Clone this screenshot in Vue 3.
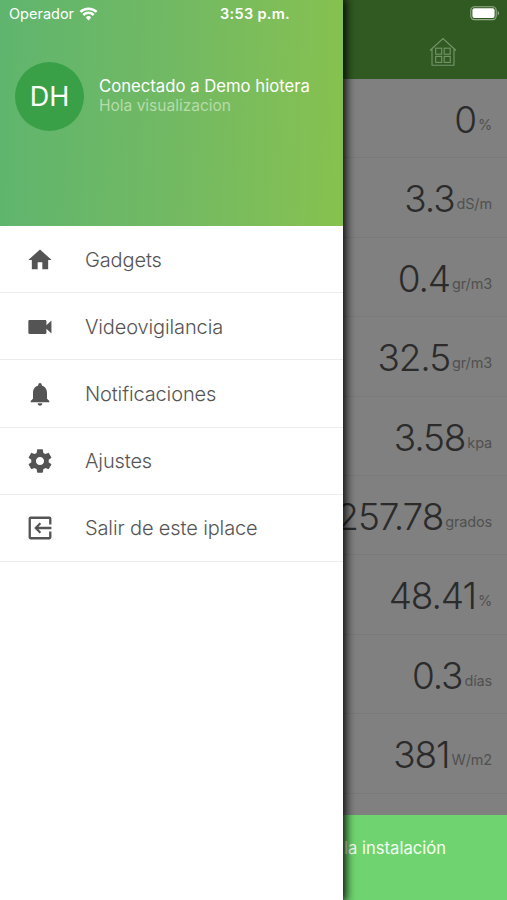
<template>
  <div class="screen">
    <div class="page">
      <div class="toolbar">
        <svg class="house" viewBox="0 0 28 30" fill="none" stroke="#76946a" stroke-width="1.1">
          <path d="M1 13.5 14 1.5 27 13.5M3 12V28.3H25V12" />
          <rect x="6.7" y="11.2" width="6" height="6" />
          <rect x="15.2" y="11.2" width="6" height="6" />
          <rect x="6.7" y="19.4" width="6" height="6" />
          <rect x="15.2" y="19.4" width="6" height="6" />
        </svg>
      </div>
      <div class="readings">
        <div class="reading" v-for="(item, i) in readings" :key="i">
          <span class="value">{{ item.value }}</span>
          <span class="unit">{{ item.unit }}</span>
        </div>
      </div>
      <div class="toast">la instalación</div>
    </div>

    <div class="drawer">
      <div class="profile">
        <div class="avatar">DH</div>
        <div class="user">
          <div class="title">Conectado a Demo hiotera</div>
          <div class="greeting">Hola visualizacion</div>
        </div>
      </div>
      <div class="menu">
        <div class="menu-item" v-for="item in menu" :key="item.label">
          <svg class="menu-icon" viewBox="0 0 24 24"><path :d="item.icon" /></svg>
          <span class="label">{{ item.label }}</span>
        </div>
      </div>
    </div>

    <div class="status">
      <div class="carrier">
        <span>Operador</span>
        <svg class="wifi" viewBox="0 0 18 14" fill="none" stroke="#fff" stroke-width="2.5">
          <path d="M0.9 4.9A11.7 11.7 0 0 1 17.1 4.9" />
          <path d="M3.8 8A7.4 7.4 0 0 1 14.2 8" />
          <path d="M6.3 10.4A3.9 3.9 0 0 1 11.7 10.4L9 13.4Z" fill="#fff" stroke="none" />
        </svg>
      </div>
      <div class="time">3:53 p.m.</div>
      <svg class="battery" viewBox="0 0 31 15">
        <rect x="0.8" y="0.8" width="25.4" height="12.8" rx="3.6" fill="none" stroke="#98ac8c" stroke-width="1.1" />
        <rect x="2.4" y="2.3" width="22.2" height="9.8" rx="2" fill="#fff" />
        <path d="M27.7 4.8Q30.6 7.2 27.7 9.6Z" fill="#98ac8c" />
      </svg>
    </div>
  </div>
</template>

<script setup>
const readings = [
  { value: '0', unit: '%' },
  { value: '3.3', unit: 'dS/m' },
  { value: '0.4', unit: 'gr/m3' },
  { value: '32.5', unit: 'gr/m3' },
  { value: '3.58', unit: 'kpa' },
  { value: '257.78', unit: 'grados' },
  { value: '48.41', unit: '%' },
  { value: '0.3', unit: 'días' },
  { value: '381', unit: 'W/m2' }
]

const menu = [
  { label: 'Gadgets', icon: 'M10 20v-6h4v6h5v-8h3L12 3 2 12h3v8z' },
  {
    label: 'Videovigilancia',
    icon: 'M17.5 10.5V7c0-.55-.45-1-1-1H3c-.55 0-1 .45-1 1v10c0 .55.45 1 1 1h13.5c.55 0 1-.45 1-1v-3.5l4.3 4v-11l-4.3 4z'
  },
  {
    label: 'Notificaciones',
    icon: 'M12 22c1.1 0 2-.9 2-2h-4c0 1.1.89 2 2 2zm6-6v-5c0-3.07-1.64-5.64-4.5-6.32V4c0-.83-.67-1.5-1.5-1.5s-1.5.67-1.5 1.5v.68C7.63 5.36 6 7.92 6 11v5l-2 2v1h16v-1l-2-2z'
  },
  {
    label: 'Ajustes',
    icon: 'M19.43 12.98c.04-.32.07-.64.07-.98s-.03-.66-.07-.98l2.11-1.65c.19-.15.24-.42.12-.64l-2-3.46c-.12-.22-.39-.3-.61-.22l-2.49 1c-.52-.4-1.08-.73-1.69-.98l-.38-2.65C14.46 2.18 14.25 2 14 2h-4c-.25 0-.46.18-.49.42l-.38 2.65c-.61.25-1.17.59-1.69.98l-2.49-1c-.23-.09-.49 0-.61.22l-2 3.46c-.13.22-.07.49.12.64l2.11 1.65c-.04.32-.07.65-.07.98s.03.66.07.98l-2.11 1.65c-.19.15-.24.42-.12.64l2 3.46c.12.22.39.3.61.22l2.49-1c.52.4 1.08.73 1.69.98l.38 2.65c.03.24.24.42.49.42h4c.25 0 .46-.18.49-.42l.38-2.65c.61-.25 1.17-.59 1.69-.98l2.49 1c.23.09.49 0 .61-.22l2-3.46c.12-.22.07-.49-.12-.64l-2.11-1.65zM12 15.5c-1.93 0-3.5-1.57-3.5-3.5s1.57-3.5 3.5-3.5 3.5 1.57 3.5 3.5-1.57 3.5-3.5 3.5z'
  },
  {
    label: 'Salir de este iplace',
    icon: 'M13 15.4 11.7 16.7 7 12l4.7-4.7L13 8.6 10.6 11H21.8v2H10.6zM4 2.2h16c1 0 1.8.8 1.8 1.8v5h-2V4.2H4.2v15.6h15.6V15h2v5c0 1-.8 1.8-1.8 1.8H4c-1 0-1.8-.8-1.8-1.8V4c0-1 .8-1.8 1.8-1.8z'
  }
]
</script>

<style>
body {
  margin: 0;
}
</style>

<style scoped>
.screen {
  position: relative;
  width: 507px;
  height: 900px;
  overflow: hidden;
  font-family: Inter, "Liberation Sans", sans-serif;
}

.page {
  display: flex;
  flex-direction: column;
  height: 900px;
  background: #808080;
}

.toolbar {
  display: flex;
  justify-content: flex-end;
  height: 79px;
  padding: 37px 50px 0 0;
  box-sizing: border-box;
  background: #315a23;
}

.house {
  width: 28px;
  height: 30px;
}

.readings {
  flex: 1;
}

.reading {
  display: flex;
  justify-content: flex-end;
  align-items: flex-start;
  height: 79.4px;
  padding: 18px 15px 0 0;
  box-sizing: border-box;
  border-bottom: 1px solid #797979;
}

.value {
  font-size: 37px;
  line-height: 46px;
  font-weight: 300;
  letter-spacing: -1.1px;
  color: #2b2b2b;
}

.unit {
  margin-left: 2px;
  padding-top: 18px;
  font-size: 14.5px;
  line-height: 20px;
  letter-spacing: -0.15px;
  color: #505050;
}

.toast {
  height: 85px;
  padding: 23px 61px 0 0;
  box-sizing: border-box;
  background: #6fd470;
  color: #f4fff2;
  font-size: 16.6px;
  line-height: 20px;
  text-align: right;
}

/* side menu lies over the dimmed page */
.drawer {
  position: absolute;
  top: 0;
  left: 0;
  width: 343.4px;
  height: 900px;
  background: #fff;
  box-shadow: 1px 0 9px 2px rgba(0, 0, 0, 0.95);
}

.profile {
  display: flex;
  height: 225.5px;
  padding: 62px 0 0 15px;
  box-sizing: border-box;
  background: linear-gradient(92deg, #5fb56e 0%, #72b963 50%, #82bf55 88%, #85c24d 100%);
}

.avatar {
  width: 69px;
  height: 69px;
  border-radius: 50%;
  background: #39a047;
  color: #fff;
  font-size: 27px;
  line-height: 69px;
  text-align: center;
}

.user {
  padding: 14px 0 0 15px;
  white-space: nowrap;
}

.title {
  font-size: 16.7px;
  line-height: 20px;
  color: #fff;
}

.greeting {
  font-size: 15.5px;
  line-height: 20px;
  color: #b5dcaa;
}

.menu {
  padding-top: 0.5px;
}

.menu-item {
  display: flex;
  align-items: center;
  height: 67.2px;
  padding: 1px 0 0 26px;
  box-sizing: border-box;
  border-bottom: 1px solid #ececec;
}

.menu-icon {
  width: 28px;
  height: 28px;
  fill: #545454;
}

.label {
  margin-left: 31px;
  font-size: 20px;
  font-weight: 300;
  letter-spacing: -0.13px;
  color: #555;
  white-space: nowrap;
}

.status {
  position: absolute;
  top: 0;
  left: 0;
  display: grid;
  grid-template-columns: 1fr auto 1fr;
  align-items: center;
  width: 507px;
  height: 27px;
  padding: 0 6px 0 9px;
  box-sizing: border-box;
  color: #fff;
  font-size: 14.5px;
}

.carrier {
  display: flex;
  align-items: center;
  gap: 5px;
}

.wifi {
  width: 19px;
  height: 14px;
}

.time {
  font-weight: 600;
  letter-spacing: 0.3px;
}

.battery {
  justify-self: end;
  width: 31px;
  height: 15px;
}
</style>
